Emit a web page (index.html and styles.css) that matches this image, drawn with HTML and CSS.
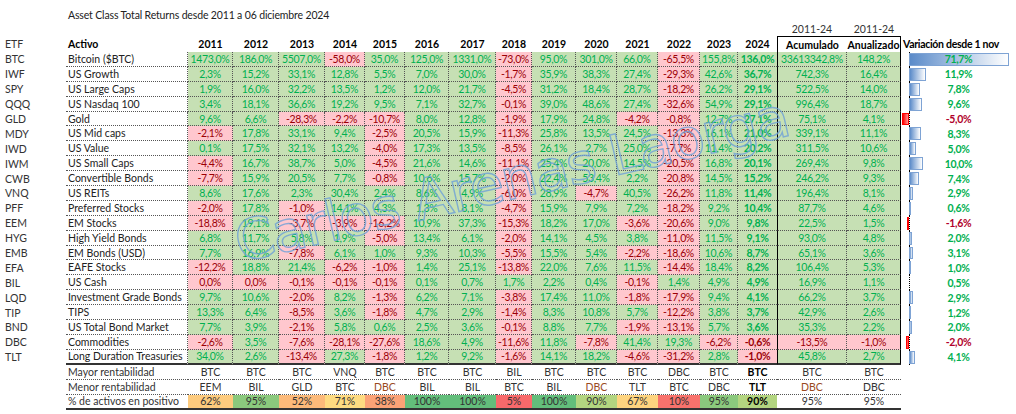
FILE: index.html
```html
<!DOCTYPE html>
<html lang="es">
<head>
<meta charset="utf-8">
<title>Asset Class Total Returns</title>
<link rel="stylesheet" href="styles.css">
</head>
<body>
<div class="title">Asset Class Total Returns desde 2011 a 06 diciembre 2024</div>

<div class="row top"><div class="l1">2011-24</div><div class="l2">2011-24</div></div>

<div class="row head">
<div class="etf">ETF</div><div class="name">Activo</div>
<div>2011</div><div>2012</div><div>2013</div><div>2014</div><div>2015</div><div>2016</div><div>2017</div><div>2018</div><div>2019</div><div>2020</div><div>2021</div><div>2022</div><div>2023</div><div>2024</div>
<div class="ac">Acumulado</div><div class="an">Anualizado</div><div class="vh">Variación desde 1 nov</div>
</div>

<div class="row data"><div class="etf">BTC</div><div class="name">Bitcoin ($BTC)</div><div class="y g">1473,0%</div><div class="y g">186,0%</div><div class="y g">5507,0%</div><div class="y r">-58,0%</div><div class="y g">35,0%</div><div class="y g">125,0%</div><div class="y g">1331,0%</div><div class="y r">-73,0%</div><div class="y g">95,0%</div><div class="y g">301,0%</div><div class="y g">66,0%</div><div class="y r">-65,5%</div><div class="y g">155,8%</div><div class="y y24 g">136,0%</div><div class="ac g">33613342,8%</div><div class="an g">148,2%</div><div class="var"><i class="bar pos" style="width:100px"></i><span class="vg">71,7%</span></div></div>

<div class="row data"><div class="etf">IWF</div><div class="name">US Growth</div><div class="y g">2,3%</div><div class="y g">15,2%</div><div class="y g">33,1%</div><div class="y g">12,8%</div><div class="y g">5,5%</div><div class="y g">7,0%</div><div class="y g">30,0%</div><div class="y r">-1,7%</div><div class="y g">35,9%</div><div class="y g">38,3%</div><div class="y g">27,4%</div><div class="y r">-29,3%</div><div class="y g">42,6%</div><div class="y y24 g">36,7%</div><div class="ac g">742,3%</div><div class="an g">16,4%</div><div class="var"><i class="bar pos" style="width:16.6px"></i><span class="vg">11,9%</span></div></div>

<div class="row data"><div class="etf">SPY</div><div class="name">US Large Caps</div><div class="y g">1,9%</div><div class="y g">16,0%</div><div class="y g">32,2%</div><div class="y g">13,5%</div><div class="y g">1,2%</div><div class="y g">12,0%</div><div class="y g">21,7%</div><div class="y r">-4,5%</div><div class="y g">31,2%</div><div class="y g">18,4%</div><div class="y g">28,7%</div><div class="y r">-18,2%</div><div class="y g">26,2%</div><div class="y y24 g">29,1%</div><div class="ac g">522,5%</div><div class="an g">14,0%</div><div class="var"><i class="bar pos" style="width:10.9px"></i><span class="vg">7,8%</span></div></div>

<div class="row data"><div class="etf">QQQ</div><div class="name">US Nasdaq 100</div><div class="y g">3,4%</div><div class="y g">18,1%</div><div class="y g">36,6%</div><div class="y g">19,2%</div><div class="y g">9,5%</div><div class="y g">7,1%</div><div class="y g">32,7%</div><div class="y r">-0,1%</div><div class="y g">39,0%</div><div class="y g">48,6%</div><div class="y g">27,4%</div><div class="y r">-32,6%</div><div class="y g">54,9%</div><div class="y y24 g">29,1%</div><div class="ac g">996,4%</div><div class="an g">18,7%</div><div class="var"><i class="bar pos" style="width:13.4px"></i><span class="vg">9,6%</span></div></div>

<div class="row data"><div class="etf">GLD</div><div class="name">Gold</div><div class="y g">9,6%</div><div class="y g">6,6%</div><div class="y r">-28,3%</div><div class="y r">-2,2%</div><div class="y r">-10,7%</div><div class="y g">8,0%</div><div class="y g">12,8%</div><div class="y r">-1,9%</div><div class="y g">17,9%</div><div class="y g">24,8%</div><div class="y r">-4,2%</div><div class="y r">-0,8%</div><div class="y g">12,7%</div><div class="y y24 g">27,1%</div><div class="ac g">75,1%</div><div class="an g">4,1%</div><div class="var"><i class="bar neg" style="width:7px"></i><span class="vr">-5,0%</span></div></div>

<div class="row data"><div class="etf">MDY</div><div class="name">US Mid caps</div><div class="y r">-2,1%</div><div class="y g">17,8%</div><div class="y g">33,1%</div><div class="y g">9,4%</div><div class="y r">-2,5%</div><div class="y g">20,5%</div><div class="y g">15,9%</div><div class="y r">-11,3%</div><div class="y g">25,8%</div><div class="y g">13,5%</div><div class="y g">24,5%</div><div class="y r">-13,3%</div><div class="y g">16,1%</div><div class="y y24 g">21,0%</div><div class="ac g">339,1%</div><div class="an g">11,1%</div><div class="var"><i class="bar pos" style="width:11.6px"></i><span class="vg">8,3%</span></div></div>

<div class="row data"><div class="etf">IWD</div><div class="name">US Value</div><div class="y g">0,1%</div><div class="y g">17,5%</div><div class="y g">32,1%</div><div class="y g">13,2%</div><div class="y r">-4,0%</div><div class="y g">17,3%</div><div class="y g">13,5%</div><div class="y r">-8,5%</div><div class="y g">26,1%</div><div class="y g">2,7%</div><div class="y g">25,0%</div><div class="y r">-7,7%</div><div class="y g">11,4%</div><div class="y y24 g">20,2%</div><div class="ac g">311,5%</div><div class="an g">10,6%</div><div class="var"><i class="bar pos" style="width:7px"></i><span class="vg">5,0%</span></div></div>

<div class="row data"><div class="etf">IWM</div><div class="name">US Small Caps</div><div class="y r">-4,4%</div><div class="y g">16,7%</div><div class="y g">38,7%</div><div class="y g">5,0%</div><div class="y r">-4,5%</div><div class="y g">21,6%</div><div class="y g">14,6%</div><div class="y r">-11,1%</div><div class="y g">25,4%</div><div class="y g">20,0%</div><div class="y g">14,5%</div><div class="y r">-20,5%</div><div class="y g">16,8%</div><div class="y y24 g">20,1%</div><div class="ac g">269,4%</div><div class="an g">9,8%</div><div class="var"><i class="bar pos" style="width:14px"></i><span class="vg">10,0%</span></div></div>

<div class="row data"><div class="etf">CWB</div><div class="name">Convertible Bonds</div><div class="y r">-7,7%</div><div class="y g">15,9%</div><div class="y g">20,5%</div><div class="y g">7,7%</div><div class="y r">-0,8%</div><div class="y g">10,6%</div><div class="y g">15,7%</div><div class="y r">-2,0%</div><div class="y g">22,4%</div><div class="y g">53,4%</div><div class="y g">2,2%</div><div class="y r">-20,8%</div><div class="y g">14,5%</div><div class="y y24 g">15,2%</div><div class="ac g">246,2%</div><div class="an g">9,3%</div><div class="var"><i class="bar pos" style="width:10.3px"></i><span class="vg">7,4%</span></div></div>

<div class="row data"><div class="etf">VNQ</div><div class="name">US REITs</div><div class="y g">8,6%</div><div class="y g">17,6%</div><div class="y g">2,3%</div><div class="y g">30,4%</div><div class="y g">2,4%</div><div class="y g">8,6%</div><div class="y g">4,9%</div><div class="y r">-6,0%</div><div class="y g">28,9%</div><div class="y r">-4,7%</div><div class="y g">40,5%</div><div class="y r">-26,2%</div><div class="y g">11,8%</div><div class="y y24 g">11,4%</div><div class="ac g">196,4%</div><div class="an g">8,1%</div><div class="var"><i class="bar pos" style="width:4px"></i><span class="vg">2,9%</span></div></div>

<div class="row data"><div class="etf">PFF</div><div class="name">Preferred Stocks</div><div class="y r">-2,0%</div><div class="y g">17,8%</div><div class="y r">-1,0%</div><div class="y g">14,1%</div><div class="y g">4,3%</div><div class="y g">1,3%</div><div class="y g">8,1%</div><div class="y r">-4,7%</div><div class="y g">15,9%</div><div class="y g">7,9%</div><div class="y g">7,2%</div><div class="y r">-18,2%</div><div class="y g">9,2%</div><div class="y y24 g">10,4%</div><div class="ac g">87,7%</div><div class="an g">4,6%</div><div class="var"><i class="bar pos" style="width:1px"></i><span class="vg">0,6%</span></div></div>

<div class="row data"><div class="etf">EEM</div><div class="name">EM Stocks</div><div class="y r">-18,8%</div><div class="y g">19,1%</div><div class="y r">-3,7%</div><div class="y r">-3,9%</div><div class="y r">-16,2%</div><div class="y g">10,9%</div><div class="y g">37,3%</div><div class="y r">-15,3%</div><div class="y g">18,2%</div><div class="y g">17,0%</div><div class="y r">-3,6%</div><div class="y r">-20,6%</div><div class="y g">9,0%</div><div class="y y24 g">9,8%</div><div class="ac g">22,5%</div><div class="an g">1,5%</div><div class="var"><i class="bar neg" style="width:2.2px"></i><span class="vr">-1,6%</span></div></div>

<div class="row data"><div class="etf">HYG</div><div class="name">High Yield Bonds</div><div class="y g">6,8%</div><div class="y g">11,7%</div><div class="y g">5,8%</div><div class="y g">1,9%</div><div class="y r">-5,0%</div><div class="y g">13,4%</div><div class="y g">6,1%</div><div class="y r">-2,0%</div><div class="y g">14,1%</div><div class="y g">4,5%</div><div class="y g">3,8%</div><div class="y r">-11,0%</div><div class="y g">11,5%</div><div class="y y24 g">9,1%</div><div class="ac g">93,0%</div><div class="an g">4,8%</div><div class="var"><i class="bar pos" style="width:2.8px"></i><span class="vg">2,0%</span></div></div>

<div class="row data"><div class="etf">EMB</div><div class="name">EM Bonds (USD)</div><div class="y g">7,7%</div><div class="y g">16,9%</div><div class="y r">-7,8%</div><div class="y g">6,1%</div><div class="y g">1,0%</div><div class="y g">9,3%</div><div class="y g">10,3%</div><div class="y r">-5,5%</div><div class="y g">15,5%</div><div class="y g">5,4%</div><div class="y r">-2,2%</div><div class="y r">-18,6%</div><div class="y g">10,6%</div><div class="y y24 g">8,7%</div><div class="ac g">65,1%</div><div class="an g">3,6%</div><div class="var"><i class="bar pos" style="width:4.3px"></i><span class="vg">3,1%</span></div></div>

<div class="row data"><div class="etf">EFA</div><div class="name">EAFE Stocks</div><div class="y r">-12,2%</div><div class="y g">18,8%</div><div class="y g">21,4%</div><div class="y r">-6,2%</div><div class="y r">-1,0%</div><div class="y g">1,4%</div><div class="y g">25,1%</div><div class="y r">-13,8%</div><div class="y g">22,0%</div><div class="y g">7,6%</div><div class="y g">11,5%</div><div class="y r">-14,4%</div><div class="y g">18,4%</div><div class="y y24 g">8,2%</div><div class="ac g">106,4%</div><div class="an g">5,3%</div><div class="var"><i class="bar pos" style="width:1.4px"></i><span class="vg">1,0%</span></div></div>

<div class="row data"><div class="etf">BIL</div><div class="name">US Cash</div><div class="y r">0,0%</div><div class="y r">0,0%</div><div class="y r">-0,1%</div><div class="y r">-0,1%</div><div class="y r">-0,1%</div><div class="y g">0,1%</div><div class="y g">0,7%</div><div class="y g">1,7%</div><div class="y g">2,2%</div><div class="y g">0,4%</div><div class="y r">-0,1%</div><div class="y g">1,4%</div><div class="y g">4,9%</div><div class="y y24 g">4,9%</div><div class="ac g">16,9%</div><div class="an g">1,1%</div><div class="var"><span class="vg">0,5%</span></div></div>

<div class="row data"><div class="etf">LQD</div><div class="name">Investment Grade Bonds</div><div class="y g">9,7%</div><div class="y g">10,6%</div><div class="y r">-2,0%</div><div class="y g">8,2%</div><div class="y r">-1,3%</div><div class="y g">6,2%</div><div class="y g">7,1%</div><div class="y r">-3,8%</div><div class="y g">17,4%</div><div class="y g">11,0%</div><div class="y r">-1,8%</div><div class="y r">-17,9%</div><div class="y g">9,4%</div><div class="y y24 g">4,1%</div><div class="ac g">66,2%</div><div class="an g">3,7%</div><div class="var"><i class="bar pos" style="width:4px"></i><span class="vg">2,9%</span></div></div>

<div class="row data"><div class="etf">TIP</div><div class="name">TIPS</div><div class="y g">13,3%</div><div class="y g">6,4%</div><div class="y r">-8,5%</div><div class="y g">3,6%</div><div class="y r">-1,8%</div><div class="y g">4,7%</div><div class="y g">2,9%</div><div class="y r">-1,4%</div><div class="y g">8,3%</div><div class="y g">10,8%</div><div class="y g">5,7%</div><div class="y r">-12,2%</div><div class="y g">3,8%</div><div class="y y24 g">3,7%</div><div class="ac g">42,9%</div><div class="an g">2,6%</div><div class="var"><i class="bar pos" style="width:1.7px"></i><span class="vg">1,2%</span></div></div>

<div class="row data"><div class="etf">BND</div><div class="name">US Total Bond Market</div><div class="y g">7,7%</div><div class="y g">3,9%</div><div class="y r">-2,1%</div><div class="y g">5,8%</div><div class="y g">0,6%</div><div class="y g">2,5%</div><div class="y g">3,6%</div><div class="y r">-0,1%</div><div class="y g">8,8%</div><div class="y g">7,7%</div><div class="y r">-1,9%</div><div class="y r">-13,1%</div><div class="y g">5,7%</div><div class="y y24 g">3,6%</div><div class="ac g">35,3%</div><div class="an g">2,2%</div><div class="var"><i class="bar pos" style="width:2.8px"></i><span class="vg">2,0%</span></div></div>

<div class="row data"><div class="etf">DBC</div><div class="name">Commodities</div><div class="y r">-2,6%</div><div class="y g">3,5%</div><div class="y r">-7,6%</div><div class="y r">-28,1%</div><div class="y r">-27,6%</div><div class="y g">18,6%</div><div class="y g">4,9%</div><div class="y r">-11,6%</div><div class="y g">11,8%</div><div class="y r">-7,8%</div><div class="y g">41,4%</div><div class="y g">19,3%</div><div class="y r">-6,2%</div><div class="y y24 r">-0,6%</div><div class="ac r">-13,5%</div><div class="an r">-1,0%</div><div class="var"><i class="bar neg" style="width:2.8px"></i><span class="vr">-2,0%</span></div></div>

<div class="row data last"><div class="etf">TLT</div><div class="name">Long Duration Treasuries</div><div class="y g">34,0%</div><div class="y g">2,6%</div><div class="y r">-13,4%</div><div class="y g">27,3%</div><div class="y r">-1,8%</div><div class="y g">1,2%</div><div class="y g">9,2%</div><div class="y r">-1,6%</div><div class="y g">14,1%</div><div class="y g">18,2%</div><div class="y r">-4,6%</div><div class="y r">-31,2%</div><div class="y g">2,8%</div><div class="y y24 r">-1,0%</div><div class="ac g">45,8%</div><div class="an g">2,7%</div><div class="var"><i class="bar pos" style="width:5.7px"></i><span class="vg">4,1%</span></div></div>

<div class="row sum"><div class="etf"></div><div class="name">Mayor rentabilidad</div><div class="s">BTC</div><div class="s">BTC</div><div class="s">BTC</div><div class="s">VNQ</div><div class="s">BTC</div><div class="s">BTC</div><div class="s">BTC</div><div class="s">BIL</div><div class="s">BTC</div><div class="s">BTC</div><div class="s">BTC</div><div class="s">DBC</div><div class="s">BTC</div><div class="s b">BTC</div><div class="s">BTC</div><div class="s">BTC</div></div>

<div class="row sum"><div class="etf"></div><div class="name">Menor rentabilidad</div><div class="s">EEM</div><div class="s">BIL</div><div class="s">GLD</div><div class="s">BTC</div><div class="s brn">DBC</div><div class="s">BIL</div><div class="s">BIL</div><div class="s">BTC</div><div class="s">BIL</div><div class="s brn">DBC</div><div class="s">TLT</div><div class="s">BTC</div><div class="s">DBC</div><div class="s b">TLT</div><div class="s brn">DBC</div><div class="s">DBC</div></div>

<div class="row sum pct"><div class="etf"></div><div class="name">% de activos en positivo</div><div class="s p62">62%</div><div class="s p95">95%</div><div class="s p52">52%</div><div class="s p71">71%</div><div class="s p38">38%</div><div class="s p100">100%</div><div class="s p100">100%</div><div class="s p5">5%</div><div class="s p100">100%</div><div class="s p90">90%</div><div class="s p67">67%</div><div class="s p10">10%</div><div class="s p95">95%</div><div class="s p90 b">90%</div><div class="s">95%</div><div class="s">95%</div></div>

<div class="wm">Carlos Arenas Laorga</div>
</body>
</html>
```

FILE: styles.css
```css
* { box-sizing: border-box; margin: 0; padding: 0; }
html, body { width: 1016px; height: 414px; overflow: hidden; background: #fff; }
body {
  position: relative;
  font-family: Lato, "DejaVu Sans", sans-serif;
  font-size: 10.5px;
  color: #222;
}
.title { height: 22px; padding: 8px 0 0 68px; line-height: 14px; color: #222; letter-spacing: -0.15px; }

.row {
  display: grid;
  grid-template-columns: 66px 122px 45px 46px 46px 40px 40px 44px 47px 36px 44px 41px 41px 42px 38px 39px 70px 54px 115px;
}
.row > * {
  display: flex;
  align-items: center;
  justify-content: center;
  white-space: nowrap;
  min-width: 0;
}
.row > .etf { justify-content: flex-start; padding-left: 5px; color: #333; }
.row > .name { justify-content: flex-start; padding-left: 2px; }

.top { height: 14px; color: #333; }
.top .l1 { grid-column: 17; }
.top .l2 { grid-column: 18; }

.head { height: 16px; font-weight: 700; color: #000; }
.head > .etf { font-weight: 400; }
.head > .ac { border-top: 1px solid #000; border-left: 1px solid #000; }
.head > .an { border-top: 1px solid #000; border-right: 1px solid #000; }
.row > .vh { justify-content: flex-start; padding-left: 2px; letter-spacing: -0.3px; }

.data { height: 14.9px; }
.data > .y, .data > .ac, .data > .an, .data > .var { letter-spacing: -0.35px; }
.data > .name { border-bottom: 1px dotted #555; border-right: 1px dotted #555; }
.data > .y { border-right: 1px dotted #555; border-bottom: 1px dotted #555; }
.data > .y24 { border-right: 0; font-weight: 700; }
.data > .ac { border-left: 1px solid #000; border-right: 1px dotted #555; border-bottom: 1px dotted #555; }
.data > .an { border-right: 1px solid #000; border-bottom: 1px dotted #555; }
.data.last > .name, .data.last > .y, .data.last > .ac, .data.last > .an { border-bottom: 2px solid #333; }

.g { background: #c6e0b4; color: #00b050; }
.r { background: #ffc7ce; color: #9c0006; }

.var { position: relative; font-weight: 700; }
.var::before {
  content: "";
  position: absolute;
  left: 8px; top: 0; bottom: 0;
  border-left: 1px dotted #000;
}
.var span { position: relative; z-index: 1; }
.vg { color: #00b050; }
.vr { color: #b0002a; }
.bar { position: absolute; top: 1px; bottom: 1px; }
.bar.pos { left: 8px; background: linear-gradient(90deg, #5b8bc9, #ffffff); border: 1px solid #7ea3d4; }
.bar.neg { right: calc(100% - 8px); background: linear-gradient(90deg, #ff0000, #ff9a9a); border: 1px solid #ff0000; }

.sum { height: 15px; color: #333; }
.sum > .name, .sum > .s { border-bottom: 1px dotted #555; }
.sum.pct > .name, .sum.pct > .s { border-bottom: 2px solid #333; }
.b { font-weight: 700; color: #000; }
.brn { color: #9a4a1e; }

.p5 { background: #f8696b; }
.p10 { background: #f8726c; }
.p38 { background: #fba276; }
.p52 { background: #fcba7a; }
.p62 { background: #fdcb7e; }
.p67 { background: #fed47f; }
.p71 { background: #fedb81; }
.p90 { background: #b3d580; }
.p95 { background: #8bc97d; }
.p100 { background: #63be7b; }

.wm {
  position: absolute;
  left: 242px;
  top: 215px;
  font-family: "DejaVu Sans", sans-serif;
  font-size: 56px;
  line-height: 56px;
  letter-spacing: -1.5px;
  white-space: nowrap;
  color: transparent;
  -webkit-text-stroke: 1.4px rgba(110, 160, 215, 0.8);
  transform: rotate(-13deg);
  transform-origin: 0 100%;
  pointer-events: none;
}
```
